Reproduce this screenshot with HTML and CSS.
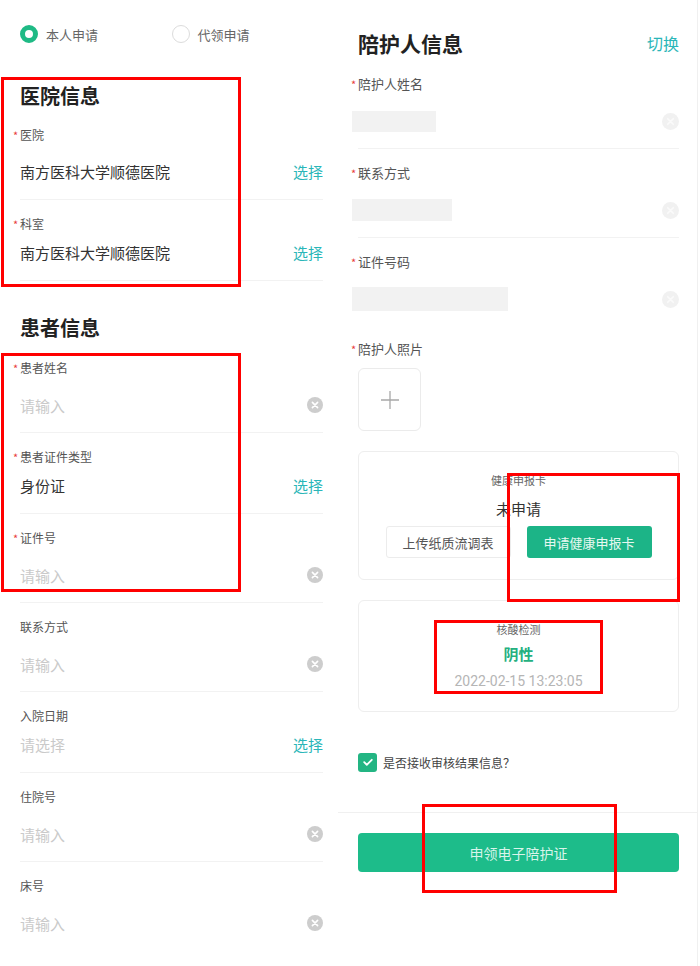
FILE: index.html
```html
<!DOCTYPE html>
<html lang="zh-CN">
<head>
    <meta charset="UTF-8">
    <meta name="viewport" content="width=device-width, initial-scale=1.0">
    <title>电子陪护证申请</title>
    <link rel="stylesheet" href="styles.css">
</head>
<body>
    <div class="page">
        <!-- 左侧：医院 / 患者信息 -->
        <div class="col col-left">
            <div class="radio-row">
                <label class="radio-item"><span class="radio radio-on"></span>本人申请</label>
                <label class="radio-item"><span class="radio"></span>代领申请</label>
            </div>

            <h2 class="section-title title-hospital">医院信息</h2>
            <div class="field field-input field-first">
                <div class="field-label"><span class="star">*</span>医院</div>
                <div class="field-value"><span class="value-text">南方医科大学顺德医院</span><span class="pick">选择</span></div>
            </div>
            <div class="field field-select">
                <div class="field-label"><span class="star">*</span>科室</div>
                <div class="field-value"><span class="value-text">南方医科大学顺德医院</span><span class="pick">选择</span></div>
            </div>

            <h2 class="section-title title-patient">患者信息</h2>
            <div class="field field-input">
                <div class="field-label"><span class="star">*</span>患者姓名</div>
                <div class="field-value"><span class="placeholder">请输入</span><span class="clear"><svg width="16" height="16" viewBox="0 0 16 16"><circle cx="8" cy="8" r="8" fill="#cdcdcd"/><path d="M5.4 5.4l5.2 5.2M10.6 5.4l-5.2 5.2" stroke="#fff" stroke-width="1.6" stroke-linecap="round"/></svg></span></div>
            </div>
            <div class="field field-select">
                <div class="field-label"><span class="star">*</span>患者证件类型</div>
                <div class="field-value"><span class="value-text">身份证</span><span class="pick">选择</span></div>
            </div>
            <div class="field field-input">
                <div class="field-label"><span class="star">*</span>证件号</div>
                <div class="field-value"><span class="placeholder">请输入</span><span class="clear"><svg width="16" height="16" viewBox="0 0 16 16"><circle cx="8" cy="8" r="8" fill="#cdcdcd"/><path d="M5.4 5.4l5.2 5.2M10.6 5.4l-5.2 5.2" stroke="#fff" stroke-width="1.6" stroke-linecap="round"/></svg></span></div>
            </div>
            <div class="field field-input">
                <div class="field-label">联系方式</div>
                <div class="field-value"><span class="placeholder">请输入</span><span class="clear"><svg width="16" height="16" viewBox="0 0 16 16"><circle cx="8" cy="8" r="8" fill="#cdcdcd"/><path d="M5.4 5.4l5.2 5.2M10.6 5.4l-5.2 5.2" stroke="#fff" stroke-width="1.6" stroke-linecap="round"/></svg></span></div>
            </div>
            <div class="field field-select">
                <div class="field-label">入院日期</div>
                <div class="field-value"><span class="placeholder">请选择</span><span class="pick">选择</span></div>
            </div>
            <div class="field field-input">
                <div class="field-label">住院号</div>
                <div class="field-value"><span class="placeholder">请输入</span><span class="clear"><svg width="16" height="16" viewBox="0 0 16 16"><circle cx="8" cy="8" r="8" fill="#cdcdcd"/><path d="M5.4 5.4l5.2 5.2M10.6 5.4l-5.2 5.2" stroke="#fff" stroke-width="1.6" stroke-linecap="round"/></svg></span></div>
            </div>
            <div class="field field-input no-line">
                <div class="field-label">床号</div>
                <div class="field-value"><span class="placeholder">请输入</span><span class="clear"><svg width="16" height="16" viewBox="0 0 16 16"><circle cx="8" cy="8" r="8" fill="#cdcdcd"/><path d="M5.4 5.4l5.2 5.2M10.6 5.4l-5.2 5.2" stroke="#fff" stroke-width="1.6" stroke-linecap="round"/></svg></span></div>
            </div>
        </div>

        <!-- 右侧：陪护人信息 -->
        <div class="col col-right">
            <div class="title-row">
                <h2 class="section-title">陪护人信息</h2>
                <span class="switch">切换</span>
            </div>
            <div class="field field-input field-r">
                <div class="field-label"><span class="star">*</span>陪护人姓名</div>
                <div class="field-value"><span class="redact redact-name"></span><span class="clear clear-faint"><svg width="17" height="17" viewBox="0 0 16 16"><circle cx="8" cy="8" r="8" fill="#f1f1f1"/><path d="M5.4 5.4l5.2 5.2M10.6 5.4l-5.2 5.2" stroke="#fafafa" stroke-width="1.6" stroke-linecap="round"/></svg></span></div>
            </div>
            <div class="field field-input field-r">
                <div class="field-label"><span class="star">*</span>联系方式</div>
                <div class="field-value"><span class="redact redact-phone"></span><span class="clear clear-faint"><svg width="17" height="17" viewBox="0 0 16 16"><circle cx="8" cy="8" r="8" fill="#f1f1f1"/><path d="M5.4 5.4l5.2 5.2M10.6 5.4l-5.2 5.2" stroke="#fafafa" stroke-width="1.6" stroke-linecap="round"/></svg></span></div>
            </div>
            <div class="field field-input field-r no-line">
                <div class="field-label"><span class="star">*</span>证件号码</div>
                <div class="field-value"><span class="redact redact-id"></span><span class="clear clear-faint"><svg width="17" height="17" viewBox="0 0 16 16"><circle cx="8" cy="8" r="8" fill="#f1f1f1"/><path d="M5.4 5.4l5.2 5.2M10.6 5.4l-5.2 5.2" stroke="#fafafa" stroke-width="1.6" stroke-linecap="round"/></svg></span></div>
            </div>

            <div class="photo-block">
                <div class="field-label"><span class="star">*</span>陪护人照片</div>
                <div class="upload">
                    <svg width="20" height="20" viewBox="0 0 20 20"><path d="M10 1v18M1 10h18" stroke="#a8a8a8" stroke-width="1.3"/></svg>
                </div>
            </div>

            <div class="card card-health">
                <div class="card-title">健康申报卡</div>
                <div class="card-status">未申请</div>
                <div class="card-actions">
                    <button class="btn btn-plain">上传纸质流调表</button>
                    <button class="btn btn-green">申请健康申报卡</button>
                </div>
            </div>

            <div class="card card-test">
                <div class="card-title">核酸检测</div>
                <div class="card-result">阴性</div>
                <div class="card-time">2022-02-15 13:23:05</div>
            </div>

            <label class="agree">
                <span class="checkbox"><svg width="12" height="12" viewBox="0 0 12 12"><path d="M2.2 6.2l2.6 2.6 5-5" fill="none" stroke="#fff" stroke-width="1.8" stroke-linecap="round" stroke-linejoin="round"/></svg></span>
                是否接收审核结果信息？
            </label>

            <div class="footer">
                <button class="submit-btn">申领电子陪护证</button>
            </div>
        </div>

        <!-- 标注框 -->
        <div class="mark mark-hospital"></div>
        <div class="mark mark-patient"></div>
        <div class="mark mark-health"></div>
        <div class="mark mark-test"></div>
        <div class="mark mark-submit"></div>
    </div>
</body>
</html>
```

FILE: styles.css
```css
* {
    margin: 0;
    padding: 0;
    box-sizing: border-box;
}
body {
    font-family: "Noto Sans CJK SC", "Noto Sans", sans-serif;
    background-color: #fff;
    color: #333;
}
.page {
    position: relative;
    display: flex;
    width: 700px;
    min-height: 966px;
}
.col-left {
    width: 338px;
    padding: 0 15px 0 20px;
}
.col-right {
    width: 360px;
    padding: 0 18px 0 20px;
    border-right: 1px solid #f0f0f0;
}

/* 申请方式 */
.radio-row {
    display: flex;
    align-items: center;
    padding-top: 23px;
    height: 45px;
}
.radio-item {
    display: flex;
    align-items: center;
    width: 152px;
    font-size: 13px;
    color: #666;
}
.radio {
    width: 18px;
    height: 18px;
    border-radius: 50%;
    border: 1px solid #dcdcdc;
    margin-right: 8px;
}
.radio-on {
    border: 5px solid #1fba85;
}

/* 标题 */
.section-title {
    font-size: 20px;
    line-height: 28px;
    font-weight: 700;
    color: #222;
}
.title-hospital {
    margin-top: 37px;
    margin-bottom: 1px;
}
.title-patient {
    margin-top: 33px;
    margin-bottom: 2px;
}
.title-row {
    display: flex;
    justify-content: space-between;
    align-items: center;
    padding-top: 29px;
    margin-bottom: 3px;
}
.title-row .section-title {
    font-size: 21px;
}
.switch {
    font-size: 16px;
    color: #2ab6b8;
}

/* 表单行 */
.field {
    padding: 14px 0 15px;
    border-bottom: 1px solid #f2f2f2;
}
.field-select {
    padding-bottom: 16px;
}
.field.no-line {
    border-bottom: none;
}
.field-label {
    height: 20px;
    font-size: 12px;
    line-height: 20px;
    color: #555;
}
.field-r .field-label,
.photo-block .field-label {
    font-size: 13px;
}
.star {
    display: inline-block;
    width: 7px;
    margin-left: -7px;
    font-size: 11px;
    line-height: 20px;
    vertical-align: top;
    color: #e83c3c;
}
.field-value {
    display: flex;
    justify-content: space-between;
    align-items: center;
    height: 24px;
}
.field-input .field-value {
    margin-top: 15px;
}
.field-first .field-value {
    margin-top: 14px;
}
.field-first {
    padding-bottom: 16px;
}
.field-select .field-value {
    margin-top: 6px;
}
.value-text {
    font-size: 15px;
    color: #333;
}
.placeholder {
    font-size: 15px;
    color: #cacaca;
}
.pick {
    font-size: 15px;
    color: #2ab6b8;
}
.clear {
    display: flex;
}
.redact {
    height: 21px;
    margin-left: -6px;
    background-color: #f2f2f2;
}
.redact-name { width: 84px; }
.redact-phone { width: 100px; height: 22px; }
.redact-id { width: 156px; height: 24px; }

/* 照片 */
.photo-block {
    padding-top: 13px;
}
.upload {
    width: 63px;
    height: 63px;
    margin-top: 9px;
    border: 1px solid #ebebeb;
    border-radius: 6px;
    display: flex;
    align-items: center;
    justify-content: center;
}

/* 卡片 */
.card {
    margin-top: 20px;
    border: 1px solid #eeeeee;
    border-radius: 6px;
    text-align: center;
}
.card-health {
    padding: 20px 0 21px;
}
.card-test {
    padding: 20px 0 20px;
}
.card-title {
    font-size: 11px;
    line-height: 16px;
    color: #666;
}
.card-status {
    margin-top: 10px;
    font-size: 15px;
    line-height: 22px;
    color: #333;
}
.card-actions {
    display: flex;
    justify-content: center;
    gap: 16px;
    margin-top: 6px;
}
.btn {
    width: 125px;
    height: 32px;
    border-radius: 3px;
    font-family: inherit;
    font-size: 13px;
}
.btn-plain {
    background-color: #fff;
    border: 1px solid #ececec;
    color: #555;
}
.btn-green {
    background-color: #1cb487;
    border: none;
    color: #e8f8f1;
}
.card-result {
    margin-top: 6px;
    font-size: 15px;
    line-height: 22px;
    font-weight: 700;
    color: #25b080;
}
.card-time {
    margin-top: 6px;
    font-family: Roboto, "Noto Sans", sans-serif;
    font-size: 14px;
    line-height: 20px;
    color: #b5b5b5;
}

/* 同意 */
.agree {
    display: flex;
    align-items: center;
    height: 20px;
    margin-top: 40px;
    font-size: 12px;
    color: #444;
}
.checkbox {
    width: 19px;
    height: 19px;
    margin-right: 6px;
    border-radius: 3px;
    background-color: #23b583;
    display: flex;
    align-items: center;
    justify-content: center;
}

/* 底部按钮 */
.footer {
    margin: 40px -18px 0 -20px;
    padding: 20px 18px 0 20px;
    border-top: 1px solid #f0f0f0;
}
.submit-btn {
    width: 100%;
    height: 39px;
    border: none;
    border-radius: 4px;
    background-color: #1dbc8a;
    color: #d9f4ea;
    font-family: inherit;
    font-size: 14px;
}

/* 红色标注框 */
.mark {
    position: absolute;
    border: 3px solid #ff0000;
}
.mark-hospital { left: 1px; top: 77px; width: 240px; height: 210px; }
.mark-patient { left: 1px; top: 353px; width: 240px; height: 239px; }
.mark-health { left: 507px; top: 473px; width: 173px; height: 129px; }
.mark-test { left: 434px; top: 620px; width: 169px; height: 74px; }
.mark-submit { left: 422px; top: 804px; width: 195px; height: 89px; }
```
